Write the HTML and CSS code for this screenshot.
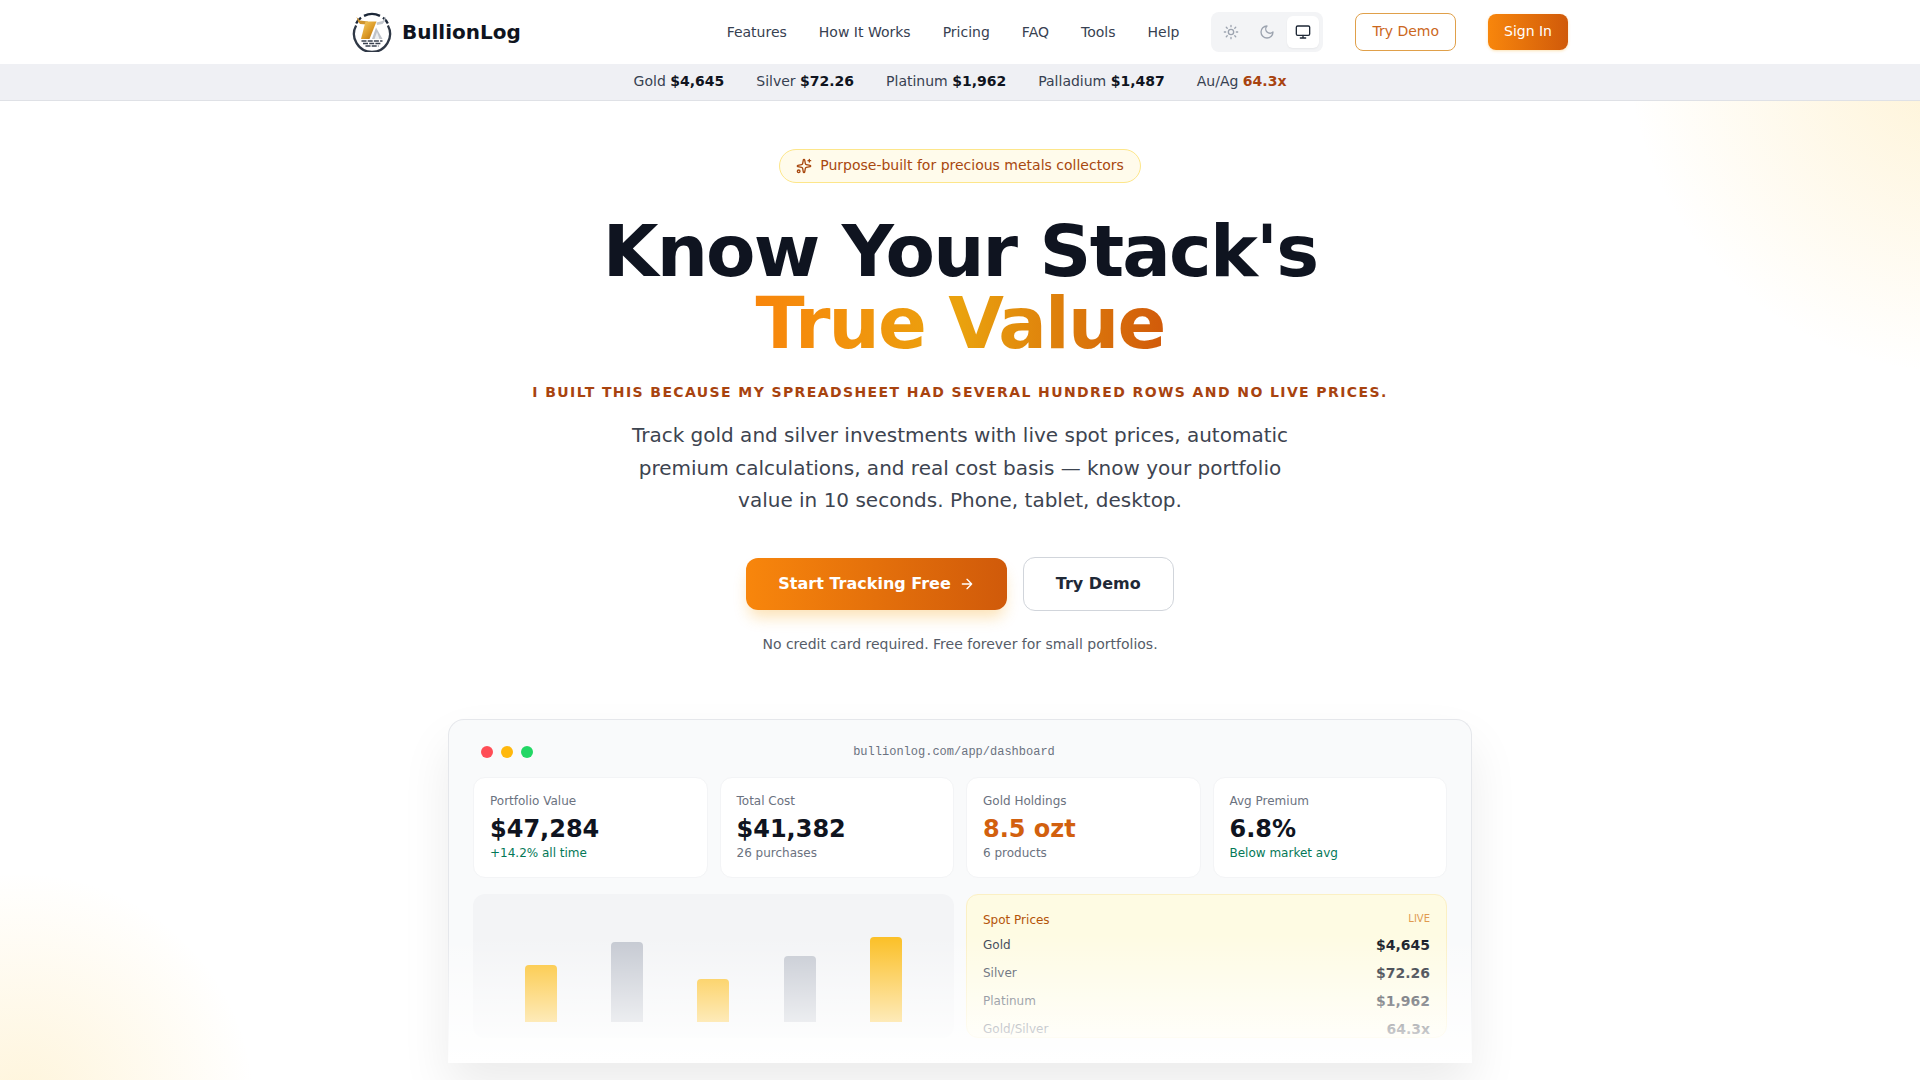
FILE: index.html
```html
<!DOCTYPE html>
<html lang="en">
<head>
<meta charset="utf-8">
<title>BullionLog</title>
<link rel="stylesheet" href="styles.css">
</head>
<body>
<header class="nav">
  <div class="nav-inner">
    <a class="brand" href="#">
      <svg class="logo" viewBox="0 0 40 40" aria-hidden="true">
        <defs>
          <linearGradient id="goldbar" x1="0" y1="0" x2="1" y2="1"><stop offset="0" stop-color="#f6cf6a"/><stop offset=".55" stop-color="#dc9a26"/><stop offset="1" stop-color="#a8660f"/></linearGradient>
        </defs>
        <path d="M4.200 11.500A18 18 0 0 1 9 5.700M12 3.900a18 18 0 0 1 16 0M31 5.700a18 18 0 0 1 4.800 5.800" fill="none" stroke="#1c2738" stroke-width="2.300"/>
        <path d="M35.900 13.500A18 18 0 1 1 4.100 13.500" fill="none" stroke="#2f3846" stroke-width="2.300"/>
        <path d="M4.500 5l3.500 3.500 8 1-1.500 3-6.500-.5-2-2.500z" fill="#cf9430"/>
        <path d="M34 4.500l-3.500 4.500-6 1.500.5 2.500 5.500-1 2.500-3z" fill="#c4c8ce"/>
        <path d="M13.500 9.500h11l-7 17.500h-8.500z" fill="url(#goldbar)"/>
        <path d="M24 15.500l6.500 11.500h-10.500z" fill="#bfc3ca"/>
        <path d="M25 20l2.500 7h-5z" fill="#eceef0"/>
        <path d="M9.500 29h21M11 31.500h18M13.500 34h13" stroke="#39414f" stroke-width="1.500" stroke-dasharray="5 1.200" fill="none"/>
      </svg>
      <span class="brand-name">BullionLog</span>
    </a>
    <nav class="nav-links">
      <a href="#">Features</a>
      <a href="#">How It Works</a>
      <a href="#">Pricing</a>
      <a href="#">FAQ</a>
      <a href="#">Tools</a>
      <a href="#">Help</a>
    </nav>
    <div class="theme">
      <span class="theme-btn"><svg viewBox="0 0 24 24"><circle cx="12" cy="12" r="4"/><path d="M12 2v2M12 20v2M4.930 4.930l1.410 1.410M17.660 17.660l1.410 1.410M2 12h2M20 12h2M6.340 17.660l-1.410 1.410M19.070 4.930l-1.410 1.410"/></svg></span>
      <span class="theme-btn"><svg viewBox="0 0 24 24"><path d="M12 3a6 6 0 0 0 9 9 9 9 0 1 1-9-9Z"/></svg></span>
      <span class="theme-btn active"><svg viewBox="0 0 24 24"><rect x="2" y="3" width="20" height="14" rx="2"/><path d="M8 21h8M12 17v4"/></svg></span>
    </div>
    <a class="btn-outline" href="#">Try Demo</a>
    <a class="btn-solid" href="#">Sign In</a>
  </div>
</header>

<div class="ticker">
  <span class="tick">Gold <b>$4,645</b></span>
  <span class="tick">Silver <b>$72.26</b></span>
  <span class="tick">Platinum <b>$1,962</b></span>
  <span class="tick">Palladium <b>$1,487</b></span>
  <span class="tick">Au/Ag <b class="ratio">64.3x</b></span>
</div>

<main class="hero">
  <div class="glow glow-tr"></div>
  <div class="glow glow-bl"></div>
  <div class="badge">
    <svg viewBox="0 0 24 24"><path d="M11.017 2.814a1 1 0 0 1 1.966 0l1.051 5.558a2 2 0 0 0 1.594 1.594l5.558 1.051a1 1 0 0 1 0 1.966l-5.558 1.051a2 2 0 0 0-1.594 1.594l-1.051 5.558a1 1 0 0 1-1.966 0l-1.051-5.558a2 2 0 0 0-1.594-1.594l-5.558-1.051a1 1 0 0 1 0-1.966l5.558-1.051a2 2 0 0 0 1.594-1.594z"/><path d="M20 2v4M22 4h-4"/><circle cx="4" cy="20" r="2"/></svg>
    <span>Purpose-built for precious metals collectors</span>
  </div>
  <h1 class="title">Know Your Stack's<br><span class="title-accent">True Value</span></h1>
  <p class="tagline">I built this because my spreadsheet had several hundred rows and no live prices.</p>
  <p class="lede">Track gold and silver investments with live spot prices, automatic premium calculations, and real cost basis — know your portfolio value in 10 seconds. Phone, tablet, desktop.</p>
  <div class="cta">
    <a class="cta-primary" href="#">Start Tracking Free
      <svg viewBox="0 0 24 24"><path d="M5 12h14M12 5l7 7-7 7"/></svg>
    </a>
    <a class="cta-secondary" href="#">Try Demo</a>
  </div>
  <p class="note">No credit card required. Free forever for small portfolios.</p>

  <section class="mock">
    <div class="mock-bar">
      <span class="dot dot-r"></span><span class="dot dot-y"></span><span class="dot dot-g"></span>
      <span class="mock-url">bullionlog.com/app/dashboard</span>
    </div>
    <div class="stats">
      <div class="stat"><div class="stat-label">Portfolio Value</div><div class="stat-value">$47,284</div><div class="stat-sub good">+14.2% all time</div></div>
      <div class="stat"><div class="stat-label">Total Cost</div><div class="stat-value">$41,382</div><div class="stat-sub">26 purchases</div></div>
      <div class="stat"><div class="stat-label">Gold Holdings</div><div class="stat-value gold">8.5 ozt</div><div class="stat-sub">6 products</div></div>
      <div class="stat"><div class="stat-label">Avg Premium</div><div class="stat-value">6.8%</div><div class="stat-sub good">Below market avg</div></div>
    </div>
    <div class="panels">
      <div class="chart">
        <span class="bar bar-gold" style="height:57px"></span>
        <span class="bar bar-silver" style="height:80px"></span>
        <span class="bar bar-gold" style="height:43px"></span>
        <span class="bar bar-silver" style="height:66px"></span>
        <span class="bar bar-gold" style="height:85px"></span>
      </div>
      <div class="spot">
        <div class="spot-head"><span class="spot-title">Spot Prices</span><span class="spot-live">LIVE</span></div>
        <div class="spot-row"><span>Gold</span><b>$4,645</b></div>
        <div class="spot-row"><span>Silver</span><b>$72.26</b></div>
        <div class="spot-row"><span>Platinum</span><b>$1,962</b></div>
        <div class="spot-row"><span>Gold/Silver</span><b>64.3x</b></div>
      </div>
    </div>
    <div class="mock-fade"></div>
  </section>
</main>
</body>
</html>
```
FILE: styles.css
```css
* { box-sizing: border-box; }
html, body { margin: 0; padding: 0; height: 1080px; overflow: hidden; background: #fff; }
body { font-family: "DejaVu Sans", sans-serif; color: #111827; }
a { text-decoration: none; color: inherit; }
p, h1 { margin: 0; }

.nav { height: 64px; background: #fff; }
.nav-inner { max-width: 1280px; height: 64px; margin: 0 auto; padding: 0 32px; display: flex; align-items: center; }
.brand { display: flex; align-items: center; gap: 10px; margin-right: auto; }
.logo { width: 40px; height: 40px; display: block; }
.brand-name { font-size: 20px; font-weight: 700; color: #0f1420; }
.nav-links { display: flex; gap: 32px; font-size: 14px; color: #374151; margin-right: 32px; }
.theme { display: flex; gap: 4px; padding: 4px; background: #f3f4f6; border-radius: 8px; margin-right: 32px; }
.theme-btn { width: 32px; height: 32px; display: flex; align-items: center; justify-content: center; border-radius: 6px; color: #9ca3af; }
.theme-btn svg { width: 16px; height: 16px; fill: none; stroke: currentColor; stroke-width: 2; stroke-linecap: round; stroke-linejoin: round; }
.theme-btn.active { background: #fff; color: #1f2937; box-shadow: 0 1px 2px rgba(0,0,0,.05); }
.btn-outline { height: 38px; padding: 0 16px 2px; display: flex; align-items: center; font-size: 14px; color: #cb671c; border: 1px solid #e0a04a; border-radius: 8px; margin-right: 32px; }
.btn-solid { height: 36px; padding: 0 16px 2px; display: flex; align-items: center; font-size: 14px; color: #fff; background: linear-gradient(90deg, #f8860c, #d05a0a); border-radius: 8px; box-shadow: 0 1px 3px rgba(245,158,11,.3); }

.ticker { height: 37px; padding-bottom: 2px; background: #eff0f4; border-bottom: 1px solid #dfe1e6; display: flex; justify-content: center; align-items: center; gap: 32px; font-size: 14px; color: #374151; }
.tick b { color: #0f1420; }
.tick b.ratio { color: #a8430f; }

.hero { position: relative; height: 979px; overflow: hidden; padding-top: 48px; display: flex; flex-direction: column; align-items: center; background: #fff; }
.glow { position: absolute; border-radius: 50%; pointer-events: none; }
.glow-tr { left: 1625px; top: -396px; width: 670px; height: 670px; background: radial-gradient(circle closest-side, rgba(251,191,36,.2), rgba(251,191,36,0)); }
.glow-bl { left: -216px; top: 771px; width: 472px; height: 472px; background: radial-gradient(circle closest-side, rgba(251,191,36,.17), rgba(251,191,36,0)); }

.badge { position: relative; height: 34px; padding: 0 16px; display: flex; align-items: center; gap: 8px; font-size: 14px; color: #a8480f; background: #fffbeb; border: 1px solid #fde68a; border-radius: 17px; }
.badge span { position: relative; top: -1px; }
.badge svg { width: 16px; height: 16px; fill: none; stroke: currentColor; stroke-width: 2; stroke-linecap: round; stroke-linejoin: round; }
.title { position: relative; margin-top: 32px; font-size: 72px; line-height: 72px; font-weight: 700; text-align: center; color: #0f1420; letter-spacing: -1.8px; }
.title-accent { background: linear-gradient(90deg, #f8860c, #eaa20e 50%, #d15a0a); -webkit-background-clip: text; background-clip: text; color: transparent; }
.tagline { position: relative; margin-top: 23px; font-size: 14px; line-height: 20px; font-weight: 700; text-transform: uppercase; letter-spacing: 1.4px; color: #a8430f; text-align: center; }
.lede { position: relative; margin-top: 17px; max-width: 672px; font-size: 20px; line-height: 32.5px; color: #3d4450; text-align: center; }
.cta { position: relative; margin-top: 40px; display: flex; align-items: center; gap: 16px; }
.cta-primary { height: 52px; padding: 0 32px; display: flex; align-items: center; gap: 8px; font-size: 16px; font-weight: 700; color: #fff; border-radius: 12px; background: linear-gradient(90deg, #f8860c, #d05a0a); box-shadow: 0 10px 15px -3px rgba(245,158,11,.3); }
.cta-primary svg { width: 16px; height: 16px; fill: none; stroke: currentColor; stroke-width: 2; stroke-linecap: round; stroke-linejoin: round; }
.cta-secondary { height: 54px; padding: 0 32px; display: flex; align-items: center; font-size: 16px; font-weight: 700; color: #1f2937; background: #fff; border: 1px solid #d1d5db; border-radius: 12px; }
.note { position: relative; margin-top: 23px; font-size: 14px; line-height: 20px; color: #565c68; }

.mock { position: relative; width: 1024px; height: 344px; margin-top: 65px; padding: 0 24px; background: #f9fafb; border: 1px solid #e5e7eb; border-bottom: 0; border-radius: 16px 16px 0 0; box-shadow: 0 25px 50px rgba(0,0,0,.08); }
.mock-bar { height: 57px; padding: 7px 8px 0; display: flex; align-items: center; gap: 8px; }
.dot { width: 12px; height: 12px; border-radius: 50%; }
.dot-r { background: #ff4d56; }
.dot-y { background: #ffb80d; }
.dot-g { background: #22d765; }
.mock-url { flex: 1; margin-right: 72px; text-align: center; font-family: "Liberation Mono", monospace; font-size: 12px; color: #6b7280; }
.stats { display: grid; grid-template-columns: repeat(4, 1fr); gap: 12px; }
.stat { height: 101px; padding: 16px; background: #fff; border: 1px solid #f3f4f6; border-radius: 12px; }
.stat-label { font-size: 12px; line-height: 14px; color: #6b7280; }
.stat-value { margin-top: 5px; font-size: 24px; line-height: 32px; font-weight: 700; color: #0f1420; }
.stat-value.gold { color: #d2600e; }
.stat-sub { font-size: 12px; line-height: 16px; color: #6b7280; }
.stat-sub.good { color: #047857; }
.panels { display: grid; grid-template-columns: 1fr 1fr; gap: 12px; margin-top: 16px; }
.chart { height: 144px; padding: 16px 25px; display: flex; justify-content: space-around; align-items: flex-end; background: #f3f4f6; border-radius: 12px; }
.bar { width: 32px; border-radius: 4px 4px 0 0; }
.bar-gold { background: #fbbf24; }
.bar-silver { background: #c4c8d1; }
.spot { height: 144px; overflow: hidden; padding: 15px 16px 16px; background: #fefbe3; border: 1px solid #fbf0c4; border-radius: 12px; }
.spot-head { height: 21px; display: flex; justify-content: space-between; align-items: flex-start; }
.spot-title { font-size: 12px; line-height: 20px; color: #b45309; }
.spot-live { font-size: 10px; line-height: 18px; color: #e09a50; }
.spot-row { height: 28px; display: flex; justify-content: space-between; align-items: center; font-size: 12px; color: #374151; }
.spot-row b { font-size: 14px; color: #0f1420; }
.mock-fade { position: absolute; left: -1px; right: -1px; bottom: 0; height: 128px; background: linear-gradient(to top, #fff, rgba(255,255,255,0)); }
```
